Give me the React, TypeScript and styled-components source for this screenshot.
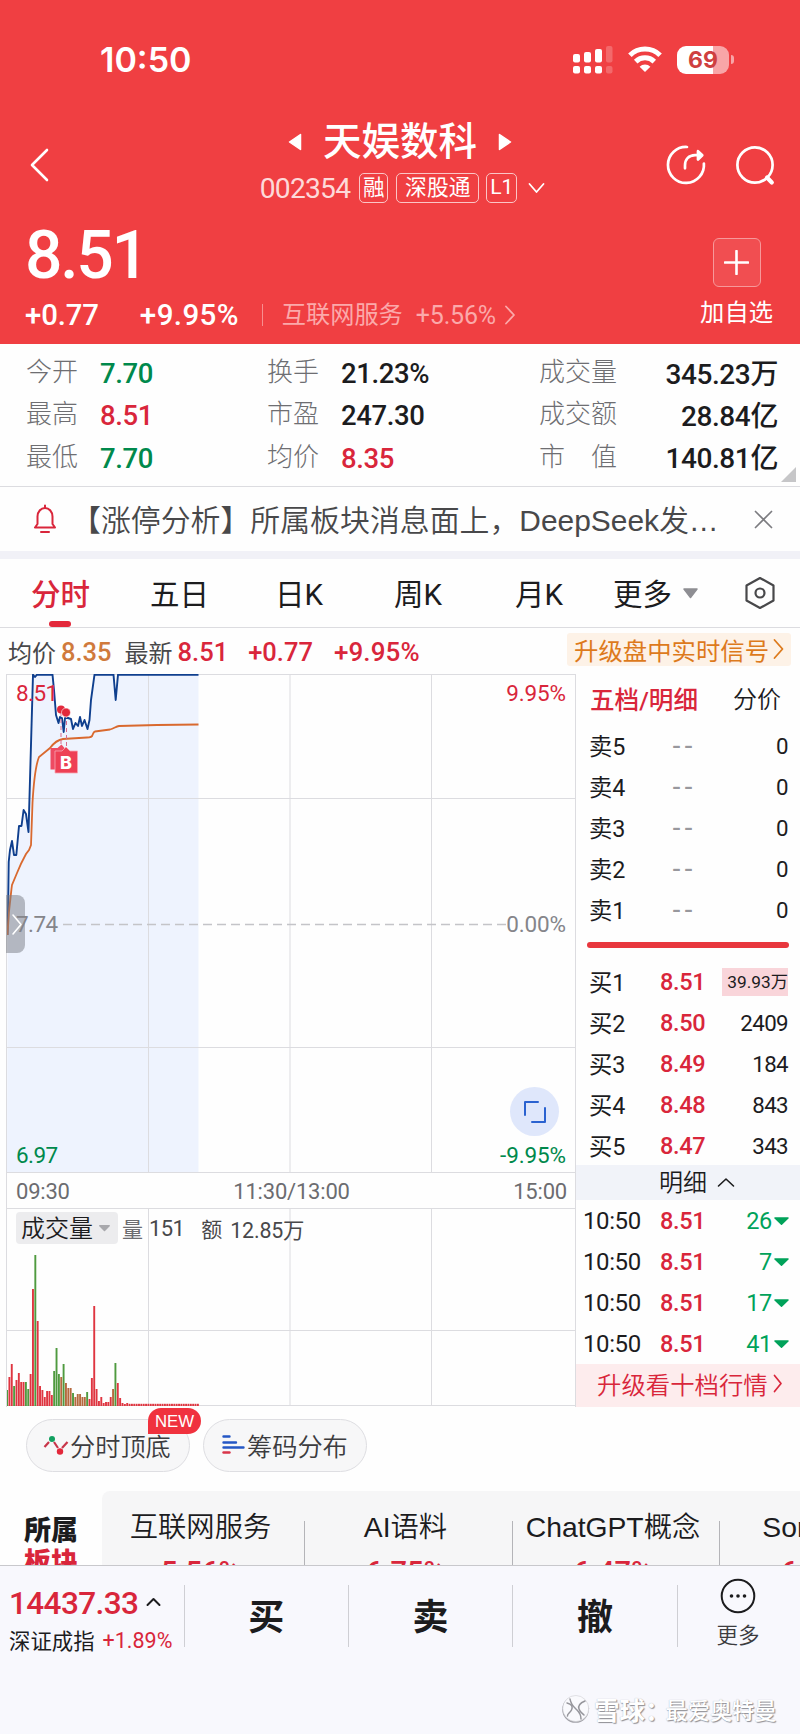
import React from 'react';
import styled, { createGlobalStyle, css } from 'styled-components';

const RED = '#d9263b';
const GREEN = '#00894c';
const INK = '#1c1c1e';
const GREY = '#7c7c80';
const LINE = '#dcdce0';

const GlobalStyle = createGlobalStyle`
  *, *::before, *::after { box-sizing: border-box; }
  body {
    margin: 0;
    background: #fefefe;
    color: ${INK};
    font-family: Roboto, 'Noto Sans CJK SC', sans-serif;
  }
  svg { display: block; flex: none; }
`;

interface TypeProps {
  $size?: number;
  $color?: string;
  $weight?: number;
  $track?: number;
  $lift?: number;
}

const type = css<TypeProps>`
  font-size: ${p => p.$size ?? 24}px;
  color: ${p => p.$color ?? INK};
  font-weight: ${p => p.$weight ?? 400};
  letter-spacing: ${p => p.$track ?? 0}px;
  padding-bottom: ${p => p.$lift ?? 0}px;
  white-space: nowrap;
`;

const Label = styled.span<TypeProps>`${type}`;
const Figure = styled.span<TypeProps & { $left?: number }>`
  ${type}
  margin-left: ${p => p.$left ?? 0}px;
`;

const Page = styled.main`
  width: 800px;
  height: 1734px;
  overflow: hidden;
  display: flex;
  flex-direction: column;
`;

/* ---------- header ---------- */

const Header = styled.header`
  background: #f03f42;
  color: #fff;
  height: 344px;
  flex: none;
`;

const StatusBar = styled.div`
  height: 117px;
  padding: 41px 66px 0 100px;
  display: flex;
  justify-content: space-between;
  align-items: flex-start;
`;

const Clock = styled.span`
  font: 600 34px/38px Inter, sans-serif;
  letter-spacing: 0;
`;

const StatusIcons = styled.div`
  display: flex;
  align-items: center;
  height: 37px;
`;

const Battery = styled.div`
  width: 52px;
  height: 28px;
  margin-left: 15px;
  border-radius: 9px;
  background: linear-gradient(90deg, #fff 69%, #f8a5a7 69%);
  color: #cf3f40;
  font: 700 23px/28px Inter, sans-serif;
  text-align: center;
`;

const BatteryNub = styled.div`
  width: 3px;
  height: 9px;
  margin-left: 2px;
  border-radius: 0 5px 5px 0;
  background: #f8a5a7;
`;

const TitleRow = styled.div`
  height: 96px;
  display: grid;
  grid-template-columns: 120px 560px 120px;
`;

const BackButton = styled.div`
  padding: 31px 0 0 29px;
`;

const TitleColumn = styled.div`
  display: flex;
  flex-direction: column;
  align-items: center;
`;

const StockName = styled.h1`
  margin: 0;
  display: flex;
  align-items: center;
  gap: 21px;
  font-size: 38.5px;
  font-weight: 500;
  line-height: 48px;
  padding-top: 1px;
`;

const TagLine = styled.div`
  display: flex;
  align-items: center;
  height: 31px;
  margin: 6px 0 0 5px;
`;

const StockCode = styled.span`
  margin-top: 2px;
  color: #fdd9d9;
  font-size: 28.2px;
  letter-spacing: -0.75px;
`;

const Tag = styled.span<{ $width: number; $gap: number; $size: number }>`
  width: ${p => p.$width}px;
  height: 30px;
  margin-left: ${p => p.$gap}px;
  border: 1.5px solid #fbc5c6;
  border-radius: 5px;
  font-size: ${p => p.$size}px;
  line-height: 27px;
  text-align: center;
  white-space: nowrap;
`;

const HeaderActions = styled.div`
  display: flex;
  gap: 29px;
  padding-top: 27px;
  margin-left: -15px;
`;

const PriceRow = styled.div`
  display: flex;
  justify-content: space-between;
  padding: 14px 27px 0 25px;
`;

const Price = styled.div`
  font-size: 66px;
  font-weight: 500;
  line-height: 58px;
  letter-spacing: -2.3px;
`;

const ChangeLine = styled.div`
  display: flex;
  align-items: center;
  height: 30px;
  margin-top: 15px;
`;

const Divider = styled.i<{ $left: number; $right: number }>`
  width: 1px;
  height: 22px;
  margin: 0 ${p => p.$right}px 0 ${p => p.$left}px;
  background: #f88e8f;
`;

const WatchColumn = styled.div`
  display: flex;
  flex-direction: column;
  align-items: center;
  padding-top: 11px;
`;

const AddBox = styled.div`
  width: 48px;
  height: 49px;
  margin-bottom: 6px;
  display: grid;
  place-items: center;
  border: 1.5px solid #f7989a;
  border-radius: 6px;
  background: #f14e51;
`;

/* ---------- stats ---------- */

const Stats = styled.section`
  position: relative;
  height: 143px;
  flex: none;
  padding: 8px 22px 0 26px;
  border-bottom: 1px solid ${LINE};
  display: grid;
  grid-template-columns: 74px 167px 74px 198px 78px 1fr;
  grid-auto-rows: 42.3px;
  align-items: center;
`;

const StatLabel = styled.span`
  margin-top: -7px;
  font-size: 26px;
  font-weight: 300;
  color: #6e6e72;
  white-space: nowrap;
`;

const StatValue = styled.span<{ $color: string; $right?: boolean }>`
  margin-top: ${p => (p.$right ? -3 : 1)}px;
  justify-self: ${p => (p.$right ? 'end' : 'start')};
  font-size: ${p => (p.$right ? 28 : 27.5)}px;
  font-weight: 500;
  letter-spacing: -0.4px;
  color: ${p => p.$color};
  white-space: nowrap;
`;

const Corner = styled.i`
  position: absolute;
  right: 4px;
  bottom: 4px;
  border-style: solid;
  border-width: 0 0 15px 15px;
  border-color: transparent transparent #c6c6c8 transparent;
`;

/* ---------- notice and tabs ---------- */

const Notice = styled.section`
  height: 72px;
  flex: none;
  display: flex;
  align-items: center;
  padding: 0 27px 0 33px;
  border-bottom: 8px solid #f1f1f7;
`;

const NoticeText = styled.p`
  margin: 0 auto 0 14px;
  padding-bottom: 2px;
  font-family: 'Liberation Sans', 'Noto Sans CJK SC', sans-serif;
  font-size: 29.9px;
  font-weight: 350;
  color: #48484a;
  white-space: nowrap;
`;

const Tabs = styled.nav`
  position: relative;
  height: 69px;
  flex: none;
  display: grid;
  grid-template-columns: 120px 126px 118px 122px 125px 133px 56px;
  align-items: center;
  border-bottom: 1px solid ${LINE};
  font-size: 29.5px;
`;

const Tab = styled.span<{ $active?: boolean; $indent: number }>`
  display: flex;
  align-items: center;
  gap: 11px;
  height: 66px;
  margin-top: -2px;
  padding-left: ${p => p.$indent}px;
  font-weight: ${p => (p.$active ? 500 : 400)};
  color: ${p => (p.$active ? RED : INK)};
  svg { margin-top: 2px; }
`;

const ActiveBar = styled.i`
  position: absolute;
  left: 49px;
  bottom: 0;
  width: 22px;
  height: 6px;
  border-radius: 3px;
  background: #e3283b;
`;

const InfoRow = styled.div`
  height: 46px;
  flex: none;
  display: flex;
  align-items: center;
  padding: 2px 9px 0 8px;
`;

const Promo = styled.div`
  display: flex;
  align-items: center;
  gap: 4px;
  height: 33px;
  width: 224px;
  margin-left: auto;
  margin-top: -5px;
  padding: 0 0 1px 7px;
  border-radius: 3px;
  background: #fdf2e7;
  color: #dd7a1c;
  font-size: 24.4px;
  white-space: nowrap;
`;

/* ---------- chart ---------- */

const Board = styled.section`
  display: grid;
  grid-template-columns: 576px 224px;
  height: 732px;
  flex: none;
`;

const ChartColumn = styled.div`
  margin-left: 6px;
  border-left: 1px solid ${LINE};
  border-right: 1px solid ${LINE};
`;

const PricePane = styled.div`
  position: relative;
  height: 498px;
`;

const AxisLabel = styled.span<{ $x: 'left' | 'right'; $top: number; $color: string }>`
  position: absolute;
  ${p => p.$x}: 9px;
  top: ${p => p.$top}px;
  font-size: 22.5px;
  font-weight: 450;
  line-height: 26px;
  letter-spacing: ${p => (p.$x === 'left' ? -0.6 : -0.1)}px;
  color: ${p => p.$color};
`;

const Drawer = styled.div`
  position: absolute;
  left: -1px;
  top: 221px;
  width: 19px;
  height: 58px;
  display: grid;
  place-items: center end;
  border-radius: 0 8px 8px 0;
  background: rgba(120, 123, 132, 0.5);
`;

const ExpandButton = styled.div`
  position: absolute;
  right: 16px;
  top: 413px;
  width: 49px;
  height: 49px;
  display: grid;
  place-items: center;
  border-radius: 50%;
  background: #dfe7fb;
`;

const TimeAxis = styled.div`
  height: 37px;
  border-top: 1px solid ${LINE};
  border-bottom: 1px solid ${LINE};
  padding: 2px 8px 0 9px;
  display: grid;
  grid-template-columns: 100px 1fr 100px;
  align-items: center;
  color: #6c6c70;
  font-size: 22px;
  letter-spacing: -0.2px;
  text-align: center;
  & > :first-child { text-align: left; }
  & > :last-child { text-align: right; }
`;

const VolumePane = styled.div`
  position: relative;
  height: 197px;
`;

const VolumeLegend = styled.div`
  position: absolute;
  left: 9px;
  top: 3px;
  height: 32px;
  display: flex;
  align-items: center;
`;

const IndicatorPicker = styled.span`
  width: 102px;
  height: 32px;
  margin-right: 4px;
  padding: 0 0 3px 5px;
  display: flex;
  align-items: center;
  gap: 6px;
  border-radius: 4px;
  background: #ececee;
  font-size: 24px;
  font-weight: 350;
  svg { margin-top: 3px; }
`;

/* ---------- order book ---------- */

const Book = styled.aside`
  display: flex;
  flex-direction: column;
`;

const BookHead = styled.div`
  height: 51px;
  padding: 0 19px 4px 14px;
  display: flex;
  align-items: center;
  justify-content: space-between;
`;

const BookRow = styled.div<{ $indent: number }>`
  height: 41px;
  flex: none;
  padding: 0 12px 0 ${p => p.$indent}px;
  display: grid;
  grid-template-columns: ${p => 84 - p.$indent}px 56px 1fr;
  align-items: center;
  font-size: 24px;
  & > :last-child { justify-self: end; }
`;

const Level = styled.span`
  margin-top: -2px;
  font-size: 23.3px;
  white-space: nowrap;
`;

const Dash = styled.span`
  padding-left: 12px;
  color: #98989d;
  font-family: 'Liberation Sans', sans-serif;
  font-size: 27px;
  letter-spacing: 3px;
`;

const BookPrice = styled.span`
  color: ${RED};
  font-weight: 500;
  font-size: 23.5px;
  letter-spacing: -0.3px;
`;

const Amount = styled.span`
  font-size: 22.3px;
  font-weight: 450;
  letter-spacing: -0.6px;
`;

const HotAmount = styled.span`
  width: 66px;
  height: 28px;
  background: #f9d5da;
  font-size: 17.3px;
  line-height: 29px;
  text-align: right;
  white-space: nowrap;
`;

const Balance = styled.div`
  height: 31px;
  padding: 12px 11px 0;
  &::before {
    content: '';
    display: block;
    height: 6px;
    border-radius: 3px;
    background: #e8373e;
  }
`;

const DetailBar = styled.div`
  height: 35px;
  margin-top: -1px;
  display: flex;
  align-items: center;
  justify-content: center;
  gap: 10px;
  padding: 0 0 4px 18px;
  background: #f1f3f9;
  font-size: 24px;
  font-weight: 350;
  svg { margin-top: 3px; }
`;

const TradeTime = styled.span`
  margin-left: -1px;
  letter-spacing: -0.4px;
`;

const Trade = styled.span`
  display: flex;
  align-items: center;
  gap: 2px;
  margin-right: -1px;
  color: #00a25a;
  font-size: 23.5px;
  font-weight: 450;
  letter-spacing: -0.3px;
`;

const UpgradeBar = styled.div`
  height: 43px;
  display: flex;
  align-items: center;
  gap: 5px;
  padding: 0 0 4px 21px;
  background: #fdeced;
  color: ${RED};
  font-size: 24.4px;
  font-weight: 350;
`;

/* ---------- chips ---------- */

const Chips = styled.section`
  height: 85px;
  flex: none;
  display: flex;
  gap: 13px;
  padding: 13px 0 0 26px;
`;

const Chip = styled.div`
  position: relative;
  width: 164px;
  height: 53px;
  display: flex;
  align-items: center;
  gap: 1px;
  padding: 0 0 2px 16px;
  border: 1px solid #dedee2;
  border-radius: 27px;
  background: #f7f7f8;
  color: #3c3c3f;
  font-size: 25.2px;
  font-weight: 350;
  white-space: nowrap;
`;

const NewBadge = styled.span`
  position: absolute;
  left: 121px;
  top: -12px;
  width: 53px;
  height: 26px;
  border-radius: 13px 13px 13px 0;
  background: #f0323e;
  color: #fff;
  font: 16.8px/28px 'Liberation Sans', sans-serif;
  text-align: center;
`;

/* ---------- sectors ---------- */

const Sectors = styled.section`
  height: 74px;
  flex: none;
  display: flex;
  overflow: hidden;
`;

const SectorTitle = styled.div`
  width: 102px;
  flex: none;
  padding: 24px 0 0 24px;
  font-size: 27px;
  line-height: 32px;
  font-weight: 900;
  em { display: block; font-style: normal; color: ${RED}; }
`;

const SectorStrip = styled.div`
  width: 825px;
  flex: none;
  display: grid;
  grid-template-columns: 202px 208px 207px 208px;
  border-radius: 8px 8px 0 0;
  background: #f6f6f7;
`;

const Sector = styled.div`
  position: relative;
  padding-top: 19px;
  padding-right: 5px;
  text-align: center;
  font: 350 28.3px/34px 'Liberation Sans', 'Noto Sans CJK SC', sans-serif;
  white-space: nowrap;
  & + &::before {
    content: '';
    position: absolute;
    left: 0;
    top: 30px;
    width: 1px;
    height: 60px;
    background: #b4b4b8;
  }
`;

const SectorRate = styled.div`
  margin-top: 11px;
  color: ${RED};
  font: 500 29px/34px Roboto, sans-serif;
`;

/* ---------- bottom bar ---------- */

const BottomBar = styled.footer`
  height: 169px;
  flex: none;
  display: flex;
  flex-direction: column;
  justify-content: space-between;
  border-top: 1px solid #c8c8cc;
  background: #f8f8fd;
`;

const Actions = styled.div`
  display: grid;
  grid-template-columns: 183.5px 164.5px 164px 165px 123px;
  padding-top: 13px;
`;

const IndexBox = styled.div`
  padding: 7px 0 0 9px;
  display: flex;
  flex-direction: column;
  gap: 3px;
`;

const IndexLine = styled.div`
  display: flex;
  align-items: center;
  height: 34px;
  svg { margin-top: -3px; }
`;

const Action = styled.div`
  height: 62px;
  margin-top: 6px;
  border-left: 1px solid #cfcfd4;
  display: flex;
  align-items: center;
  justify-content: center;
  padding-bottom: 4px;
  font-size: 36px;
  font-weight: 700;
`;

const MoreAction = styled.div`
  height: 62px;
  margin-top: 6px;
  border-left: 1px solid #cfcfd4;
  display: flex;
  flex-direction: column;
  align-items: center;
  gap: 8px;
  padding-right: 2px;
  font-size: 21.5px;
  font-weight: 350;
  line-height: 28px;
  color: #3c3c3f;
  svg { margin-top: -7px; }
`;

const Watermark = styled.div`
  display: flex;
  align-items: center;
  gap: 4px;
  height: 51px;
  padding-left: 560px;
  color: #fff;
  font-size: 25.5px;
  font-weight: 700;
  white-space: nowrap;
  text-shadow: 1px 1px 1px #8e8e94, 0 0 1px #b0b0b6;
`;

const WatermarkName = styled.span`
  margin-left: -9px;
  font-size: 22.2px;
  font-weight: 500;
`;

/* ---------- drawings ---------- */

interface ChevronProps { d: string; w: number; h: number; color?: string; sw?: number; left?: number }
const Icon = styled.svg<{ $left?: number }>`margin-left: ${p => p.$left ?? 0}px;`;

const Stroke = ({ d, w, h, color = '#fff', sw = 2, left }: ChevronProps) => (
  <Icon $left={left} width={w} height={h} viewBox={`0 0 ${w} ${h}`} fill="none" stroke={color}
    strokeWidth={sw} strokeLinecap="round" strokeLinejoin="round"><path d={d} /></Icon>
);

const Solid = ({ d, w, h, color = '#fff' }: ChevronProps) => (
  <svg width={w} height={h} viewBox={`0 0 ${w} ${h}`} fill={color} stroke={color} strokeWidth="1.5" strokeLinejoin="round"><path d={d} /></svg>
);

const Signal = () => (
  <svg width="40" height="29" viewBox="0 0 40 29" fill="#fff">
    <rect x="0" y="9" width="7" height="8.500" rx="2" /><rect x="11" y="7" width="7" height="10.500" rx="2" />
    <rect x="22" y="4" width="7" height="13.500" rx="2" /><rect x="33" y="1" width="6.500" height="16.500" rx="2" opacity=".22" />
    <rect x="0" y="21" width="7" height="7.500" rx="2" /><rect x="11" y="21" width="7" height="7.500" rx="2" />
    <rect x="22" y="21" width="7" height="7.500" rx="2" /><rect x="33" y="21" width="6.500" height="7.500" rx="2" opacity=".22" />
  </svg>
);

const Wifi = () => (
  <Icon $left={15} width="34" height="27" viewBox="0 0 34 27" fill="none" stroke="#fff" strokeWidth="5">
    <path d="M1.900 9.200a21.500 21.500 0 0 1 30.200 0" /><path d="M7.700 15.600a13.400 13.400 0 0 1 18.600 0" />
    <path d="M17 26l-5.400-5.300a7.600 7.600 0 0 1 10.800 0z" fill="#fff" stroke="none" />
  </Icon>
);

const ShareIcon = () => (
  <svg width="42" height="42" viewBox="0 0 42 42" fill="none" stroke="#fff" strokeWidth="2.7" strokeLinecap="round" strokeLinejoin="round">
    <path d="M22 3A18 18 0 1 0 38.900 19.500" /><path d="M20 24.300V21.500C20 15 24 11.400 30 11.200H36.500" />
    <path d="M33 7.200l4.300 4-4.300 4.300z" fill="#fff" />
  </svg>
);

const SearchIcon = () => (
  <svg width="42" height="42" viewBox="0 0 42 42" fill="none" stroke="#fff" strokeWidth="2.7" strokeLinecap="round">
    <circle cx="19" cy="21" r="17.600" /><path d="M31 33.500l4.800 5" strokeWidth="4.200" />
  </svg>
);

const Bell = () => (
  <svg width="24" height="30" viewBox="0 0 24 30" fill="none" stroke={RED} strokeWidth="2" strokeLinejoin="round" strokeLinecap="round">
    <path d="M12 1.500v2M2 23.500h20l-2.500-3.500V12.500a7.500 8.500 0 0 0-15 0V20z" /><path d="M8 28h8" />
  </svg>
);

const HexIcon = () => (
  <svg width="32" height="34" viewBox="0 0 32 34" fill="none" stroke="#48484a" strokeWidth="2.2" strokeLinejoin="round">
    <path d="M16 2l13.500 7.500v15L16 32 2.500 24.500v-15z" /><circle cx="16" cy="17" r="4.500" />
  </svg>
);

/* Coordinates are in the price pane's own space: 568 x 498. */
const pricePath =
  '0.5,261 1,240 1.700,188 3,176 5,167 7,181 9.300,181 12,152 14.500,152 16.600,136 19,140 21.500,158 26,0.700 28,3 30,0.700 45.500,0.700 47,16 49,41 51.500,49 53,43 55,44 56.700,58 58,44 61,44 64,45 66,55 68.500,49 71,52 73,43 75,52 77.500,46 80.500,55 82.500,46 84,26 87.500,0.700 106.500,0.700 108.700,26 111,0.700 191.500,0.700';
const averagePath =
  'M0.500 261C1.500 235 4 219 5 211L10 199Q14 189 19 180L22 176L24 171L25.500 129Q27.500 94 32 83L43 74Q49 66 56 65L80 63.500Q85 63.500 85.500 61Q87 57.500 88 57.500L103 55.500C107 54.500 109 52.500 112 52L150 51L191.500 50.500';

const PriceChart = () => (
  <svg width="568" height="498" viewBox="0 0 568 498" fill="none">
    <polygon points={`${pricePath} 191.500,498 0,498`} fill="#eef3fe" />
    <path d="M0 .5h568M0 124.500h568M0 373.500h568M141.500 0v498M283 0v498M424.500 0v498" stroke={LINE} />
    <path d="M56 250.500h448" stroke="#c4c4c8" strokeWidth="1.500" strokeDasharray="9 5" />
    <polyline points={pricePath} stroke="#0f3f8e" strokeWidth="1.900" strokeLinejoin="round" />
    <path d={averagePath} stroke="#d9692f" strokeWidth="1.800" />
    <path d="M54 38v40M59.500 40v40" stroke="#d96a8c" strokeDasharray="4 3" />
    <circle cx="54" cy="35.500" r="4" fill="#e3283b" />
    <circle cx="59" cy="38.500" r="4.500" fill="#e3283b" stroke="#fff" strokeWidth=".6" />
    <path d="M43.500 74h7l4-3.500 3 3.500v21.500h-14z" fill="#ee4b62" />
    <path d="M48 77h7l4-4 4 4h7.500v22H48z" fill="#ee4055" stroke="#f6a6b2" strokeWidth=".8" />
    <text x="59" y="94.500" fill="#fff" fontFamily="Inter" fontWeight="800" fontSize="18" textAnchor="middle">B</text>
  </svg>
);

const R = '#df3540';
const G = '#4f9a3f';
const M = '#b5693e';
const volumes: Array<[number, string]> = [
  [16, G], [29, R], [42, R], [20, G], [26, R], [33, R], [24, R], [24, R], [24, G], [17, G], [32, R],
  [117, R], [151, G], [85, R], [20, R], [16, R], [9, R], [15, R], [15, R], [11, R], [35, G], [58, G],
  [32, G], [29, M], [42, G], [23, M], [18, M], [18, M], [13, G], [9, M], [12, M], [12, M], [9, M],
  [9, M], [14, G], [7, R], [28, R], [100, R], [17, R], [5, R], [9, R], [3, R], [4, R], [4, R], [9, R],
  [17, M], [43, G], [23, R], [8, R], [3, R], [2, R], [3, R],
  ...Array.from({ length: 30 }, (): [number, string] => [2.2, R]),
];

const VolumeChart = () => (
  <svg width="568" height="197" viewBox="0 0 568 197">
    <path d="M0 121.500h568M0 196.500h568M141.500 0v197M283 0v197M424.500 0v197" stroke={LINE} fill="none" />
    {volumes.map(([h, color], i) => (
      <rect key={i} x={i * 2.356 - 0.9} y={197 - h} width="1.900" height={h} fill={color} />
    ))}
  </svg>
);

const PeaksIcon = () => (
  <svg width="26" height="22" viewBox="0 0 26 22" fill="none" stroke="#c8364a" strokeWidth="2.200">
    <path d="M1.500 13L6 8M11 8l4 6M19 14l5.500-6" />
    <circle cx="9" cy="5" r="3" fill="#12a060" stroke="none" /><circle cx="17" cy="17.500" r="3.200" fill="#e3283b" stroke="none" />
  </svg>
);

const BarsIcon = () => (
  <Icon $left={2} width="24" height="20" viewBox="0 0 24 20" strokeWidth="2.400" strokeLinecap="round" stroke="#2457c5">
    <path d="M1.500 1.500h6M1.500 7.500h12.500M1.500 12.500h20" /><path d="M1.500 17.500h6" stroke="#d9364a" />
  </Icon>
);

const MoreIcon = () => (
  <svg width="36" height="36" viewBox="0 0 36 36" fill="none" stroke={INK} strokeWidth="2">
    <circle cx="18" cy="18" r="16.300" />
    <g fill={INK} stroke="none"><circle cx="11.500" cy="18" r="1.800" /><circle cx="18" cy="18" r="1.800" /><circle cx="24.500" cy="18" r="1.800" /></g>
  </svg>
);

const SnowballIcon = () => (
  <svg width="30" height="30" viewBox="0 0 30 30" fill="none" strokeLinecap="round">
    <circle cx="15.500" cy="15.500" r="13.300" fill="#a2a2a8" />
    <circle cx="15.800" cy="14.500" r="13" fill="#fafafd" stroke="#cfcfd4" strokeWidth=".6" />
    <path d="M7 9c5 1 6 4 4.500 7S7 20 7.500 22M10 5c1 6 4 8 7 11s4 6 4 9M25 7c-5 2-7 5-6 8s3 4 5 6" stroke="#96969c" strokeWidth="1.500" />
  </svg>
);

/* ---------- data ---------- */

const stats: Array<[string, string, string][]> = [
  [['今开', '7.70', GREEN], ['换手', '21.23%', INK], ['成交量', '345.23万', INK]],
  [['最高', '8.51', RED], ['市盈', '247.30', INK], ['成交额', '28.84亿', INK]],
  [['最低', '7.70', GREEN], ['均价', '8.35', RED], ['市　值', '140.81亿', INK]],
];
const asks = ['卖5', '卖4', '卖3', '卖2', '卖1'];
const bids = [['买1', '8.51', '39.93万'], ['买2', '8.50', '2409'], ['买3', '8.49', '184'], ['买4', '8.48', '843'], ['买5', '8.47', '343']];
const trades = ['26', '7', '17', '41'];
const sectors = [['互联网服务', '5.56%'], ['AI语料', '6.75%'], ['ChatGPT概念', '6.47%'], ['Sora概念', '6.12%']];

export default function App() {
  return (
    <Page>
      <GlobalStyle />
      <Header>
        <StatusBar>
          <Clock>10:50</Clock>
          <StatusIcons><Signal /><Wifi /><Battery>69</Battery><BatteryNub /></StatusIcons>
        </StatusBar>
        <TitleRow>
          <BackButton><Stroke d="M18 2L3 17l15 15" w={20} h={34} sw={2.6} /></BackButton>
          <TitleColumn>
            <StockName>
              <Solid d="M12.500 1.500v15L1.500 9z" w={14} h={18} />天娱数科<Solid d="M1.500 1.500v15l11-7.500z" w={14} h={18} />
            </StockName>
            <TagLine>
              <StockCode>002354</StockCode>
              <Tag $width={29} $gap={9} $size={21.5}>融</Tag>
              <Tag $width={83} $gap={8} $size={21.8}>深股通</Tag>
              <Tag $width={31} $gap={7} $size={21}>L1</Tag>
              <Stroke d="M1.500 2l7 8 7-8" w={17} h={12} sw={1.8} left={11} />
            </TagLine>
          </TitleColumn>
          <HeaderActions><ShareIcon /><SearchIcon /></HeaderActions>
        </TitleRow>
        <PriceRow>
          <div>
            <Price>8.51</Price>
            <ChangeLine>
              <Label $size={29.3} $weight={500} $color="#fff" $track={-0.1}>+0.77</Label>
              <Figure $size={29.5} $weight={500} $color="#fff" $left={41} $track={0.4}>+9.95%</Figure>
              <Divider $left={23} $right={19} />
              <Label $size={24.2} $color="#fba9aa" $lift={5}>互联网服务</Label>
              <Figure $size={25} $color="#fba9aa" $left={13} $track={-0.2}>+5.56%</Figure>
              <Stroke d="M2 1.500l8 8.500-8 8.500" w={12} h={20} color="#fba9aa" sw={1.8} left={8} />
            </ChangeLine>
          </div>
          <WatchColumn>
            <AddBox><Stroke d="M12.500 1v23M1 12.500h23" w={25} h={25} sw={2.6} /></AddBox>
            <Label $size={24.3} $color="#fff">加自选</Label>
          </WatchColumn>
        </PriceRow>
      </Header>

      <Stats>
        {stats.flatMap(row => row.flatMap(([name, value, color], i) => [
          <StatLabel key={name}>{name}</StatLabel>,
          <StatValue key={name + value} $color={color} $right={i === 2}>{value}</StatValue>,
        ]))}
        <Corner />
      </Stats>

      <Notice>
        <Bell />
        <NoticeText>【涨停分析】所属板块消息面上，DeepSeek发…</NoticeText>
        <Stroke d="M1.500 1.500l16 16M17.500 1.500l-16 16" w={19} h={19} color={GREY} sw={1.7} />
      </Notice>

      <Tabs>
        <Tab $active $indent={31}>分时</Tab>
        <Tab $indent={30}>五日</Tab>
        <Tab $indent={29}>日K</Tab>
        <Tab $indent={30}>周K</Tab>
        <Tab $indent={29}>月K</Tab>
        <Tab $indent={2}>更多<Solid d="M1 1h13L7.500 9.500z" w={15} h={11} color="#8e8e93" /></Tab>
        <HexIcon />
        <ActiveBar />
      </Tabs>

      <InfoRow>
        <Label $size={24} $color="#48484a" $lift={2}>均价</Label>
        <Figure $size={25.5} $color="#d07a3c" $weight={500} $left={5}>8.35</Figure>
        <Figure $size={24} $color="#48484a" $left={13} $lift={2}>最新</Figure>
        <Figure $size={25.5} $color={RED} $weight={500} $left={5}>8.51</Figure>
        <Figure $size={25.5} $color={RED} $weight={500} $left={20}>+0.77</Figure>
        <Figure $size={26} $color={RED} $weight={500} $left={21} $track={0.1}>+9.95%</Figure>
        <Promo>升级盘中实时信号<Stroke d="M1.500 2l8 9-8 9" w={11} h={22} color="#dd7a1c" sw={1.8} /></Promo>
      </InfoRow>

      <Board>
        <ChartColumn>
          <PricePane>
            <PriceChart />
            <AxisLabel $x="left" $top={6} $color={RED}>8.51</AxisLabel>
            <AxisLabel $x="right" $top={6} $color={RED}>9.95%</AxisLabel>
            <Drawer><Stroke d="M2 2l8 9.500-8 9.500" w={14} h={23} sw={1.6} /></Drawer>
            <AxisLabel $x="left" $top={237} $color="#85858a">7.74</AxisLabel>
            <AxisLabel $x="right" $top={237} $color="#85858a">0.00%</AxisLabel>
            <AxisLabel $x="left" $top={468} $color={GREEN}>6.97</AxisLabel>
            <AxisLabel $x="right" $top={468} $color={GREEN}>-9.95%</AxisLabel>
            <ExpandButton><Stroke d="M15 2H2v13M22 8v14H9" w={24} h={24} color="#2a62d0" sw={2} /></ExpandButton>
          </PricePane>
          <TimeAxis><span>09:30</span><span>11:30/13:00</span><span>15:00</span></TimeAxis>
          <VolumePane>
            <VolumeChart />
            <VolumeLegend>
              <IndicatorPicker>成交量<Solid d="M.800.800h9.400L5.500 5.500z" w={11} h={7} color="#a8a8ac" /></IndicatorPicker>
              <Label $size={21} $color="#6c6c70">量</Label>
              <Figure $size={22} $color="#48484a" $left={6} $track={-0.6}>151</Figure>
              <Figure $size={21} $color="#48484a" $left={17}>额</Figure>
              <Figure $size={21.4} $color="#48484a" $left={8} $track={-0.2}>12.85万</Figure>
            </VolumeLegend>
          </VolumePane>
        </ChartColumn>

        <Book>
          <BookHead>
            <Label $size={24.6} $color={RED} $weight={500}>五档/明细</Label>
            <Label $size={24} $weight={350}>分价</Label>
          </BookHead>
          {asks.map(level => (
            <BookRow key={level} $indent={13}><Level>{level}</Level><Dash>--</Dash><Amount>0</Amount></BookRow>
          ))}
          <Balance />
          {bids.map(([level, price, amount], i) => (
            <BookRow key={level} $indent={13}>
              <Level>{level}</Level><BookPrice>{price}</BookPrice>
              {i === 0 ? <HotAmount>{amount}</HotAmount> : <Amount>{amount}</Amount>}
            </BookRow>
          ))}
          <DetailBar>明细<Stroke d="M1.500 9L9 2l7.500 7" w={18} h={11} color={INK} sw={1.6} /></DetailBar>
          {trades.map(amount => (
            <BookRow key={amount} $indent={8}>
              <TradeTime>10:50</TradeTime><BookPrice>8.51</BookPrice>
              <Trade>{amount}<Solid d="M1 1h13L7.500 7.200z" w={15} h={8} color="#00a25a" /></Trade>
            </BookRow>
          ))}
          <UpgradeBar>升级看十档行情<Stroke d="M1.500 1.500l6.500 8-6.500 8" w={10} h={19} color={RED} sw={1.7} /></UpgradeBar>
        </Book>
      </Board>

      <Chips>
        <Chip><PeaksIcon />分时顶底<NewBadge>NEW</NewBadge></Chip>
        <Chip><BarsIcon />筹码分布</Chip>
      </Chips>

      <Sectors>
        <SectorTitle>所属<em>板块</em></SectorTitle>
        <SectorStrip>
          {sectors.map(([name, rate]) => <Sector key={name}>{name}<SectorRate>{rate}</SectorRate></Sector>)}
        </SectorStrip>
      </Sectors>

      <BottomBar>
        <Actions>
          <IndexBox>
            <IndexLine>
              <Label $size={31.5} $weight={500} $color={RED} $track={-0.6}>14437.33</Label>
              <Stroke d="M1.500 8L7.500 2l6 6" w={15} h={10} color={INK} sw={2} left={8} />
            </IndexLine>
            <IndexLine>
              <Label $size={21.4} $lift={1}>深证成指</Label>
              <Figure $size={21.5} $color={RED} $left={8} $weight={450}>+1.89%</Figure>
            </IndexLine>
          </IndexBox>
          <Action>买</Action>
          <Action>卖</Action>
          <Action>撤</Action>
          <MoreAction><MoreIcon />更多</MoreAction>
        </Actions>
        <Watermark><SnowballIcon />雪球：<WatermarkName>最爱奥特曼</WatermarkName></Watermark>
      </BottomBar>
    </Page>
  );
}
